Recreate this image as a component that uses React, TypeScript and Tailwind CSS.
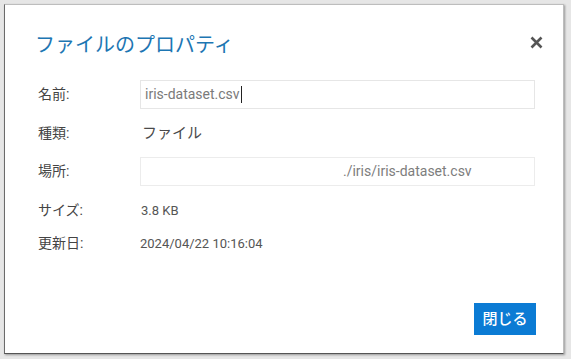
import React from "react";

const font = { fontFamily: 'Roboto, "Noto Sans CJK JP", sans-serif' };

export default function App() {
  return (
    <div
      className="w-[571px] h-[359px] bg-[#e6e6e6] pl-[4px] pt-[4px] overflow-hidden"
      style={font}
    >
      <div className="w-[560px] h-[350px] bg-white border border-[#bdbdbd] border-l-[#6b6b6b] border-b-[#555] flex flex-col shadow-[1px_1px_2px_rgba(0,0,0,0.35)]">
        <div className="flex items-center justify-between pl-[30px] pr-[20px] pt-[25px] h-[54px]">
          <div className="text-[20px] leading-[28px] text-[#1d76b3]">ファイルのプロパティ</div>
          <svg width="13" height="13" viewBox="0 0 13 13" className="mt-[-4px]">
            <path d="M1.5 1.5 L11.5 11.5 M11.5 1.5 L1.5 11.5" stroke="#555" strokeWidth="2.6" strokeLinecap="butt" />
          </svg>
        </div>
        <div className="pl-[33px] pr-[28px] mt-[21px] flex flex-col text-[14px] text-[#444]">
          <div className="flex items-center h-[29px]">
            <div className="w-[102px]">名前:</div>
            <div className="flex-1 h-[29px] border border-[#e6e6e6] flex items-center pl-[4px] text-[#7a7a7a] text-[14px]">
              iris-dataset.csv<span className="inline-block w-px h-[17px] bg-[#222] ml-[1px]" />
            </div>
          </div>
          <div className="flex items-center h-[29px] mt-[10px]">
            <div className="w-[104px]">種類:</div>
            <div className="text-[15px] text-[#4a4a4a]">ファイル</div>
          </div>
          <div className="flex items-center h-[29px] mt-[9px]">
            <div className="w-[102px]">場所:</div>
            <div className="flex-1 h-[29px] border border-[#ececec] flex items-center pl-[202px] text-[#7d7d7d] text-[14px]">
              ./iris/iris-dataset.csv
            </div>
          </div>
          <div className="flex items-center h-[29px] mt-[10px]">
            <div className="w-[103px]">サイズ:</div>
            <div className="text-[13px] text-[#555]">3.8 KB</div>
          </div>
          <div className="flex items-center h-[29px] mt-[4px]">
            <div className="w-[102px]">更新日:</div>
            <div className="text-[13px] text-[#555]">2024/04/22 10:16:04</div>
          </div>
        </div>
        <div className="mt-auto flex justify-end pr-[27px] pb-[18px]">
          <button className="w-[62px] h-[32px] bg-[#0b7bd4] text-white text-[15px] font-medium">
            閉じる
          </button>
        </div>
      </div>
    </div>
  );
}
